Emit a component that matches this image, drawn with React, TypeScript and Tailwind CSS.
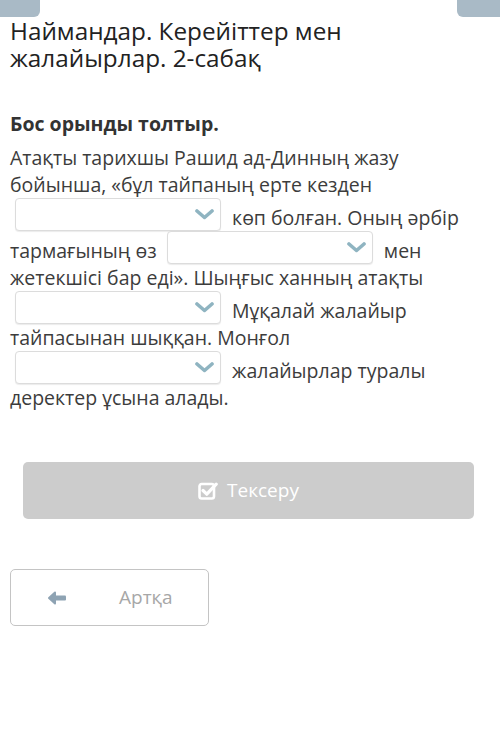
import { useState } from 'react';

const font = { fontFamily: '"Open Sans", "Noto Sans", sans-serif' };

function Blank({ value, onChange }: { value: string; onChange: (v: string) => void }) {
  return (
    <span className="relative ml-[5px] mr-[6px] inline-block h-[33px] w-[206px] align-text-bottom">
      <select
        value={value}
        onChange={(e) => onChange(e.target.value)}
        className="h-full w-full appearance-none rounded-[4px] border border-[#dcdcdc] bg-white px-2 text-[16px] text-[#333] shadow-[0_1px_1px_rgba(0,0,0,0.08)] outline-none"
      >
        <option value=""></option>
      </select>
      {/* шеврон */}
      <svg
        className="pointer-events-none absolute right-[7px] top-[11px]"
        width="19"
        height="11"
        viewBox="0 0 19 11"
      >
        <path d="M2 2 L9.5 8.5 L17 2" fill="none" stroke="#8fb4c1" strokeWidth="3.6" strokeLinecap="round" strokeLinejoin="round" />
      </svg>
    </span>
  );
}

export default function App() {
  const [answers, setAnswers] = useState(['', '', '', '']);
  const set = (i: number) => (v: string) => setAnswers((a) => a.map((x, j) => (j === i ? v : x)));

  return (
    <div className="relative min-h-[746px] w-[500px] bg-white" style={font}>
      {/* жоғарғы батырмалар */}
      <div className="flex justify-between">
        <div className="h-[17px] w-[40px] rounded-br-[6px] bg-[#a9bac6]" />
        <div className="h-[17px] w-[43px] rounded-bl-[6px] bg-[#a9bac6]" />
      </div>

      <h1 className="pl-[10px] pr-[40px] text-[24.3px] leading-[27px] text-[#222]">
        Наймандар. Керейіттер мен жалайырлар. 2-сабақ
      </h1>

      <h2 className="mt-[39px] px-[10px] text-[19.5px] font-bold leading-[27px] text-[#333]">Бос орынды толтыр.</h2>

      <p className="mt-[7px] w-[480px] pl-[10px] text-[19.5px] leading-[27px] text-[#3c3c3c]">
        Атақты тарихшы Рашид ад-Динның жазу бойынша, «бұл тайпаның ерте кезден{' '}
        <Blank value={answers[0]} onChange={set(0)} /> көп болған. Оның әрбір тармағының өз{' '}
        <Blank value={answers[1]} onChange={set(1)} /> мен жетекшісі бар еді». Шыңғыс ханның атақты{' '}
        <Blank value={answers[2]} onChange={set(2)} /> Мұқалай жалайыр тайпасынан шыққан. Монғол{' '}
        <Blank value={answers[3]} onChange={set(3)} /> жалайырлар туралы деректер ұсына алады.
      </p>

      <div className="mt-[51px] pl-[23px] pr-[26px]">
        <button className="flex h-[57px] w-full items-center justify-center gap-[9px] rounded-[5px] bg-[#cccccc] text-[19px] text-white">
          <svg width="20" height="19" viewBox="0 0 20 19">
            <rect x="1.5" y="3" width="14.5" height="14.5" rx="2.2" fill="none" stroke="white" strokeWidth="2.6" />
            <path d="M5 9.5 L8.8 13.2 L18.2 3.2" fill="none" stroke="white" strokeWidth="3.2" strokeLinecap="round" strokeLinejoin="round" />
          </svg>
          Тексеру
        </button>
      </div>

      <div className="mt-[50px] px-[10px]">
        <button className="flex h-[57px] w-[199px] items-center rounded-[5px] border border-[#c4c4c4] bg-white text-[19px] text-[#a7a7a7]">
          <svg className="ml-[36px]" width="20" height="14" viewBox="0 0 20 14">
            <path d="M8 1.5 L2 7 L8 12.5 Z" fill="#8ea3b3" stroke="#8ea3b3" strokeWidth="2" strokeLinejoin="round" />
            <rect x="6" y="4.6" width="13" height="4.8" rx="1" fill="#8ea3b3" />
          </svg>
          <span className="ml-[52px]">Артқа</span>
        </button>
      </div>
    </div>
  );
}
